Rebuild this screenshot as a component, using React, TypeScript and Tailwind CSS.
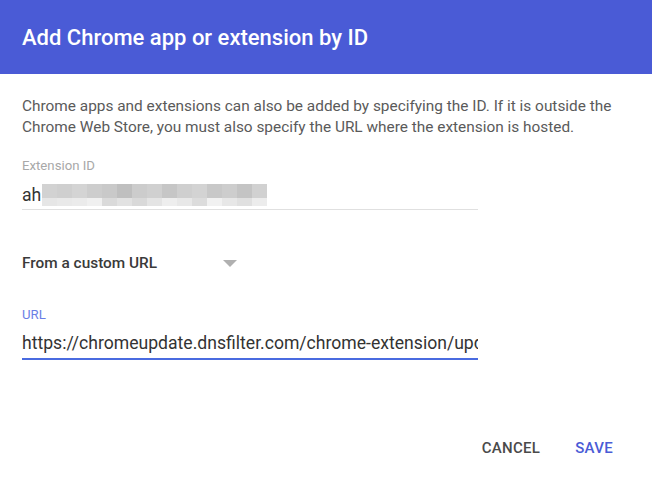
import React from "react";

const topBlocks = ["#d2d2d2","#cfcfcf","#d4d4d4","#cdcdcd","#c9c9c9","#bfbfbf","#cccccc","#d0d0d0","#c6c6c6","#cfcfcf","#d3d3d3","#c8c8c8","#cdcdcd","#c4c4c4","#d1d1d1"];
const botBlocks = ["#e6e6e6","#e9e9e9","#ebebeb","#f0f0f0","#dadada","#e2e2e2","#d9d9d9","#e4e4e4","#eeeeee","#e8e8e8","#dcdcdc","#f1f1f1","#e7e7e7","#e0e0e0","#ececec"];

export default function App() {
  return (
    <div className="w-[652px] h-[481px] bg-white flex flex-col overflow-hidden" style={{ fontFamily: "Roboto, 'Liberation Sans', sans-serif" }}>
      <div className="h-[74px] shrink-0 bg-[#4a5bd6] px-[22px] pt-[25px]">
        <h1 className="text-white text-[22px] font-medium leading-[26px]">Add Chrome app or extension by ID</h1>
      </div>
      <div className="px-[22px] pt-[22px] flex flex-col">
        <p className="text-[15.4px] leading-[21px] text-[#5a5a5a] whitespace-nowrap">
          Chrome apps and extensions can also be added by specifying the ID. If it is outside the<br />
          Chrome Web Store, you must also specify the URL where the extension is hosted.
        </p>
        <div className="w-[456px] mt-[20px] flex flex-col">
          <div className="text-[13.2px] leading-[16px] text-[#a8a8a8]">Extension ID</div>
          <div className="flex items-start mt-[9px] h-[27px] border-b border-[#e0e0e0]">
            <span className="text-[17.6px] leading-[24px] text-[#333]">ah</span>
            <div className="flex flex-col mt-[1px] ml-[1px]">
              <div className="flex">
                {topBlocks.map((c, i) => (
                  <div key={i} className="w-[15px] h-[14px]" style={{ background: c }} />
                ))}
              </div>
              <div className="flex">
                {botBlocks.map((c, i) => (
                  <div key={i} className="w-[15px] h-[8px]" style={{ background: c }} />
                ))}
              </div>
            </div>
          </div>
        </div>
        <div className="flex items-center mt-[43px] h-[20px]">
          <span className="text-[15.4px] leading-[20px] font-medium text-[#3a3a3a] w-[201px]">From a custom URL</span>
          <svg width="14" height="7" viewBox="0 0 14 7"><path d="M0 0 L14 0 L7 7 Z" fill="#b0b0b0" /></svg>
        </div>
        <div className="w-[456px] mt-[34px] flex flex-col">
          <div className="text-[13.2px] leading-[16px] text-[#6a7ee6]">URL</div>
          <div className="mt-[8px] h-[29px] border-b-2 border-[#4a6be0] overflow-hidden whitespace-nowrap">
            <span className="text-[17.6px] leading-[24px] text-[#333]">https://chromeupdate.dnsfilter.com/chrome-extension/update.xml</span>
          </div>
        </div>
      </div>
      <div className="flex justify-end items-center gap-[35px] pr-[39px] mt-[78px]">
        <span className="text-[15px] leading-[20px] font-medium text-[#4a4a4a] tracking-[0.3px]">CANCEL</span>
        <span className="text-[15px] leading-[20px] font-medium text-[#4a5bd6] tracking-[0.3px]">SAVE</span>
      </div>
    </div>
  );
}
